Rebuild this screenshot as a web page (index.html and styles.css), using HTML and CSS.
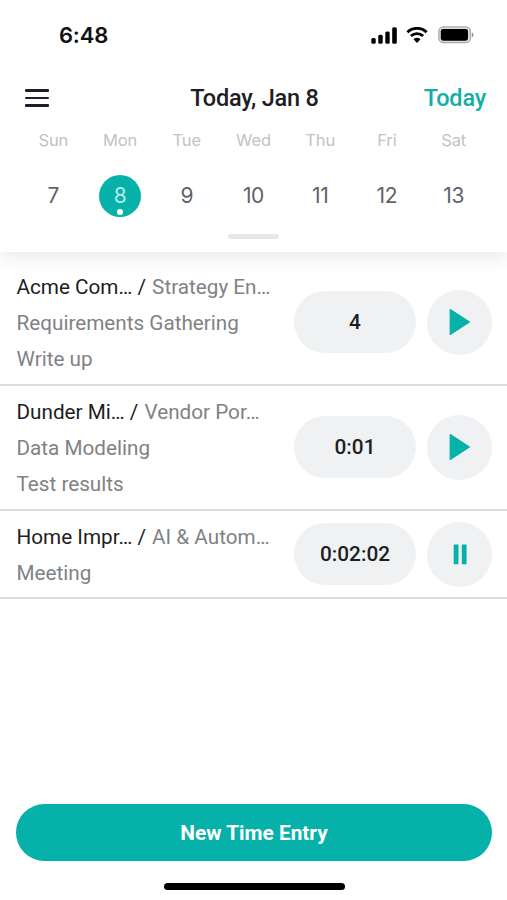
FILE: index.html
```html
<!DOCTYPE html>
<html lang="en">
<head>
  <meta charset="UTF-8" />
  <meta name="viewport" content="width=device-width, initial-scale=1.0" />
  <title>Today, Jan 8</title>
  <link rel="stylesheet" href="styles.css">
</head>
<body>
  <header class="top">
    <div class="status-bar">
      <span class="clock">6:48</span>
      <div class="status-icons">
        <svg class="signal" width="27" height="17" viewBox="0 0 27 17">
          <rect x="0.3" y="11" width="4.4" height="5.8" rx="1.5" />
          <rect x="7.3" y="7.8" width="4.4" height="9" rx="1.5" />
          <rect x="14.3" y="4.4" width="4.4" height="12.4" rx="1.5" />
          <rect x="21.2" y="0.3" width="4.6" height="16.5" rx="1.5" />
        </svg>
        <svg class="wifi" width="22" height="16" viewBox="0 0 22 16">
          <path d="M1.4 5.2a13.8 13.8 0 0 1 19.2 0" />
          <path d="M4.9 9.1a8.8 8.8 0 0 1 12.2 0" />
          <path class="wifi-dot" d="M7.5 12.3a5 5 0 0 1 7 0L11 15.9z" />
        </svg>
        <svg class="battery" width="36" height="18" viewBox="0 0 36 18">
          <rect class="battery-shell" x="0.8" y="0.9" width="31.6" height="15.8" rx="4.6" />
          <rect x="2.8" y="2.9" width="27.2" height="11.8" rx="2.4" />
          <path class="battery-tip" d="M33.8 6.2c2.2.9 2.2 4.3 0 5.2z" />
        </svg>
      </div>
    </div>

    <nav class="nav-bar">
      <button class="menu-btn" aria-label="Menu">
        <span></span>
        <span></span>
        <span></span>
      </button>
      <h1>Today, Jan 8</h1>
      <a class="today-link" href="#">Today</a>
    </nav>

    <div class="week">
      <div class="day"><span class="day-name">Sun</span><span class="day-num">7</span></div>
      <div class="day active"><span class="day-name">Mon</span><span class="day-num">8</span></div>
      <div class="day"><span class="day-name">Tue</span><span class="day-num">9</span></div>
      <div class="day"><span class="day-name">Wed</span><span class="day-num">10</span></div>
      <div class="day"><span class="day-name">Thu</span><span class="day-num">11</span></div>
      <div class="day"><span class="day-name">Fri</span><span class="day-num">12</span></div>
      <div class="day"><span class="day-name">Sat</span><span class="day-num">13</span></div>
    </div>
    <div class="handle"></div>
  </header>

  <main class="entries">
    <div class="entry">
      <div class="entry-text">
        <p><span class="client">Acme Com… /</span> Strategy En…</p>
        <p>Requirements Gathering</p>
        <p>Write up</p>
      </div>
      <div class="time">4</div>
      <button class="timer-btn" aria-label="Start">
        <svg width="22" height="28" viewBox="0 0 22 28"><path d="M1.2 1.6L20.4 14 1.2 26.4z" /></svg>
      </button>
    </div>
    <div class="entry">
      <div class="entry-text">
        <p><span class="client">Dunder Mi… /</span> Vendor Por…</p>
        <p>Data Modeling</p>
        <p>Test results</p>
      </div>
      <div class="time">0:01</div>
      <button class="timer-btn" aria-label="Start">
        <svg width="22" height="28" viewBox="0 0 22 28"><path d="M1.2 1.6L20.4 14 1.2 26.4z" /></svg>
      </button>
    </div>
    <div class="entry">
      <div class="entry-text">
        <p><span class="client">Home Impr… /</span> AI &amp; Autom…</p>
        <p>Meeting</p>
      </div>
      <div class="time">0:02:02</div>
      <button class="timer-btn" aria-label="Pause">
        <svg width="22" height="28" viewBox="0 0 22 28"><path d="M5.3 5h3.6v18.6H5.3zM13.4 5h3.6v18.6h-3.6z" /></svg>
      </button>
    </div>
  </main>

  <footer class="bottom">
    <button class="new-btn">New Time Entry</button>
    <div class="home-bar"></div>
  </footer>
</body>
</html>
```
FILE: styles.css
```css
* {
  box-sizing: border-box;
}
body {
  font-family: Roboto, 'Liberation Sans', sans-serif;
  background: #fff;
  color: #1d1e24;
  margin: 0;
  height: 900px;
  display: flex;
  flex-direction: column;
  overflow: hidden;
}
button {
  font-family: inherit;
  border: none;
  padding: 0;
  cursor: pointer;
}
.top {
  height: 252px;
  background: #fff;
  box-shadow: 0 3px 20px rgba(40, 40, 60, 0.12);
  display: flex;
  flex-direction: column;
}
.status-bar {
  height: 70px;
  padding: 0 33px 0 59px;
  display: flex;
  align-items: center;
  justify-content: space-between;
}
.clock {
  font-family: Inter, sans-serif;
  font-size: 22px;
  font-weight: 600;
  letter-spacing: -0.2px;
  color: #111;
}
.status-icons {
  display: flex;
  align-items: center;
  gap: 8px;
}
.wifi {
  fill: none;
  stroke: #000;
  stroke-width: 2.8;
}
.wifi .wifi-dot {
  fill: #000;
  stroke: none;
}
.battery {
  margin-left: 2px;
}
.battery .battery-shell {
  fill: #ddd;
  stroke: #aaa;
  stroke-width: 1.3;
}
.battery .battery-tip {
  fill: #999;
}
.nav-bar {
  height: 56px;
  padding: 0 21px 0 25px;
  display: grid;
  grid-template-columns: 1fr auto 1fr;
  align-items: center;
}
.menu-btn {
  width: 24px;
  background: none;
  display: flex;
  flex-direction: column;
  gap: 5px;
}
.menu-btn span {
  height: 2.7px;
  border-radius: 1px;
  background: #1d1e2b;
}
.nav-bar h1 {
  margin: 0 2px 0 0;
  font-size: 23.5px;
  font-weight: 500;
  letter-spacing: -0.2px;
}
.today-link {
  justify-self: end;
  font-size: 23.5px;
  font-weight: 500;
  letter-spacing: -0.2px;
  color: #13aea6;
  text-decoration: none;
}
.week {
  padding: 3px 20px 0;
  display: grid;
  grid-template-columns: repeat(7, 1fr);
  font-family: Inter, sans-serif;
}
.day {
  display: flex;
  flex-direction: column;
  align-items: center;
}
.day-name {
  font-size: 16.5px;
  line-height: 22px;
  letter-spacing: -0.1px;
  color: #c0c3c7;
}
.day-num {
  position: relative;
  width: 42px;
  margin-top: 24px;
  border-radius: 50%;
  font-size: 21px;
  line-height: 42px;
  letter-spacing: -0.3px;
  text-align: center;
  color: #5f6368;
}
.day.active .day-num {
  background: #05b1a9;
  color: #b0ebe7;
}
.day.active .day-num::after {
  content: "";
  position: absolute;
  left: 18px;
  bottom: 2px;
  width: 6px;
  height: 6px;
  border-radius: 50%;
  background: #fff;
}
.handle {
  width: 51px;
  height: 5px;
  margin: 17px auto 0;
  border-radius: 3px;
  background: #e6e8ea;
}
.entries {
  flex: 1;
  padding-top: 9px;
}
.entry {
  padding: 7px 15px 7px 16.5px;
  border-bottom: 2px solid #dcdddf;
  display: flex;
  align-items: center;
}
.entry-text {
  flex: 1;
  padding-top: 0.8px;
  margin-bottom: -0.8px;
  color: #808285;
  font-size: 20.7px;
  line-height: 36.3px;
  white-space: nowrap;
}
.entry-text p {
  margin: 0;
}
.client {
  margin-right: 1px;
  color: #1d1e22;
}
.time {
  width: 122px;
  height: 62px;
  margin-right: 11px;
  border-radius: 31px;
  background: #eff1f3;
  font-size: 20.8px;
  font-weight: 500;
  line-height: 63px;
  text-align: center;
}
.timer-btn {
  width: 65px;
  height: 65px;
  border-radius: 50%;
  background: #eff1f3;
  display: flex;
  align-items: center;
  justify-content: center;
}
.timer-btn svg {
  fill: #05b1a9;
  stroke: #05b1a9;
  stroke-width: 1.2;
  stroke-linejoin: round;
}
.bottom {
  height: 96px;
  padding: 0 15px 0 16px;
}
.new-btn {
  width: 100%;
  height: 57px;
  border-radius: 29px;
  background: #05b1a9;
  color: #fff;
  font-size: 20.8px;
  font-weight: 700;
}
.home-bar {
  width: 181px;
  height: 7px;
  margin: 22px auto 0;
  border-radius: 4px;
  background: #000;
}
```
